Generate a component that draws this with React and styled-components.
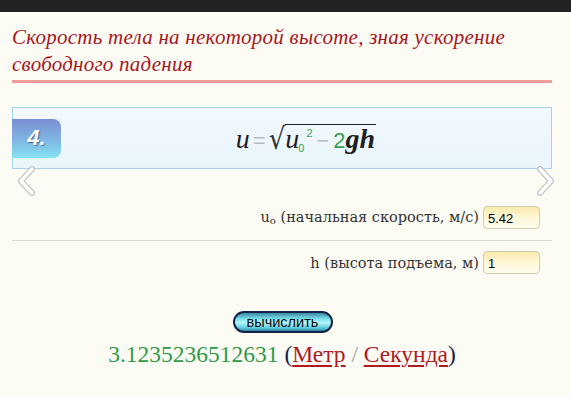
import React from "react";
import styled, { createGlobalStyle } from "styled-components";

const GlobalStyle = createGlobalStyle`
  html, body { margin: 0; padding: 0; }
  body { background: #fcfcf5; font-family: "Liberation Serif", serif; }
`;

const TopBar = styled.div`
  height: 12px;
  background: #222222;
`;

const Main = styled.div`
  padding: 0 19px 0 12px;
`;

const Title = styled.h1`
  margin: 12px 0 0;
  padding-bottom: 2px;
  border-bottom: 3px solid #f09c9c;
  font-family: "Liberation Serif", serif;
  font-style: italic;
  font-weight: normal;
  font-size: 21px;
  letter-spacing: 0.25px;
  line-height: 27px;
  color: #a8161b;
`;

const Card = styled.div`
  position: relative;
  margin-top: 24px;
  height: 60px;
  border: 1px solid #a7d3ea;
  background: linear-gradient(180deg, #f2f9fe 0%, #e9f5fc 100%);
  display: flex;
  align-items: center;
`;

const Badge = styled.div`
  width: 49px;
  height: 39px;
  margin-left: -1px;
  border-radius: 0 8px 8px 0;
  background: linear-gradient(180deg, #7b8fd4 0%, #7fb6e4 55%, #86e3f2 100%);
  display: flex;
  align-items: center;
  justify-content: center;
  font-family: "Liberation Sans", Arial, sans-serif;
  font-weight: bold;
  font-style: italic;
  font-size: 22px;
  color: #ffffff;
  text-shadow: 1px 1px 1px rgba(40, 60, 110, 0.6);
`;

const Formula = styled.div`
  flex: 1;
  display: flex;
  justify-content: center;
  align-items: baseline;
  padding-top: 4px;
  color: #222;
`;

const Var = styled.span`
  font-family: "Liberation Serif", "DejaVu Serif", serif;
  font-style: italic;
  font-size: 28px;
  font-weight: ${(p) => (p.$bold ? "bold" : "normal")};
  color: #1e1e1e;
`;

const Op = styled.span`
  font-family: "Liberation Sans", Arial, sans-serif;
  font-size: 22px;
  color: #bdbdbd;
  margin: 0 ${(p) => p.$gap || 3}px;
`;

const Num = styled.span`
  font-family: "Liberation Sans", Arial, sans-serif;
  font-size: 22px;
  color: #3e9f52;
`;

const Small = styled.span`
  font-family: "Liberation Sans", Arial, sans-serif;
  font-size: 11px;
  color: #3e9f52;
  position: relative;
  top: ${(p) => p.$top}px;
  margin-left: ${(p) => p.$ml || 0}px;
`;

const Radical = styled.span`
  font-family: "DejaVu Serif", serif;
  font-size: 26px;
  color: #333;
  transform: scaleY(1.15);
  display: inline-block;
`;

const Radicand = styled.span`
  border-top: 1px solid #222;
  display: inline-flex;
  align-items: baseline;
  padding-right: 1px;
  line-height: 28px;
`;

const Chevron = styled.svg`
  position: absolute;
  top: 58px;
  ${(p) => (p.$side === "left" ? "left: 4px;" : "right: -4px;")}
  width: 20px;
  height: 30px;
`;

const Row = styled.div`
  box-sizing: border-box;
  display: flex;
  justify-content: flex-end;
  align-items: center;
  gap: 4px;
  padding: ${(p) => p.$pad};
  ${(p) => (p.$divider ? "border-bottom: 1px solid #dedbd2;" : "")}
`;

const Label = styled.span`
  font-family: "DejaVu Serif", Georgia, serif;
  font-size: 14.5px;
  color: #333;
`;

const Sub = styled.sub`
  font-size: 10px;
  vertical-align: -2px;
`;

const Input = styled.input`
  box-sizing: border-box;
  width: 57px;
  height: 23px;
  border: 1px solid #cfcbb0;
  border-radius: 4px;
  background: linear-gradient(180deg, #fcebad 0%, #fff6d2 45%, #fffdf0 100%);
  font-family: "Liberation Sans", Arial, sans-serif;
  font-size: 13px;
  color: #000;
  padding: 2px 4px 0;
  outline: none;
`;

const ButtonWrap = styled.div`
  display: flex;
  justify-content: center;
  margin-top: 37px;
`;

const CalcButton = styled.button`
  box-sizing: border-box;
  width: 100px;
  height: 22px;
  border: 2px solid #14224a;
  border-radius: 11px;
  background: linear-gradient(180deg, #3a8aa0 0%, #7fe6f2 35%, #b6f6fb 55%, #52c8dc 85%, #2c7f98 100%);
  font-family: "Liberation Sans", Arial, sans-serif;
  font-size: 14.5px;
  color: #0a0a0a;
  padding: 0;
  line-height: 16px;
  margin-left: 1px;
`;

const Result = styled.div`
  text-align: center;
  margin-top: 8px;
  font-family: "Liberation Serif", serif;
  font-size: 23.5px;
  color: #1b1b45;
`;

const Value = styled.span`
  color: #2f9a48;
`;

const UnitLink = styled.a`
  color: #b01a1f;
  text-decoration: underline;
  text-decoration-thickness: 2px;
  text-underline-offset: 3px;
`;

const Slash = styled.span`
  color: #a0a0a0;
`;

function ChevronIcon({ side }) {
  const pts = side === "left" ? "15,3 4,15 15,27" : "5,3 16,15 5,27";
  return (
    <Chevron $side={side} viewBox="0 0 20 30">
      <polyline points={pts} fill="none" stroke="#c2c2c2" strokeWidth="6" strokeLinecap="round" strokeLinejoin="round" />
      <polyline points={pts} fill="none" stroke="#ffffff" strokeWidth="3.5" strokeLinecap="round" strokeLinejoin="round" />
    </Chevron>
  );
}

export default function App() {
  return (
    <>
      <GlobalStyle />
      <TopBar />
      <Main>
        <Title>Скорость тела на некоторой высоте, зная ускорение свободного падения</Title>
        <Card>
          <Badge>4.</Badge>
          <Formula>
            <Var>u</Var>
            <Op $gap={3}>=</Op>
            <Radical>√</Radical>
            <Radicand>
              <Var>u</Var>
              <Small $top={4} $ml={-1}>0</Small>
              <Small $top={-11} $ml={2}>2</Small>
              <Op $gap={4}>−</Op>
              <Num>2</Num>
              <Var $bold>gh</Var>
            </Radicand>
          </Formula>
          <ChevronIcon side="left" />
          <ChevronIcon side="right" />
        </Card>
        <Row $pad="37px 12px 11px 0" $divider>
          <Label>
            u<Sub>o</Sub> (начальная скорость, м/с)
          </Label>
          <Input defaultValue="5.42" />
        </Row>
        <Row $pad="10px 12px 0 0">
          <Label>h (высота подъема, м)</Label>
          <Input defaultValue="1" />
        </Row>
        <ButtonWrap>
          <CalcButton>вычислить</CalcButton>
        </ButtonWrap>
        <Result>
          <Value>3.1235236512631</Value> (<UnitLink href="#">Метр</UnitLink> <Slash>/</Slash>{" "}
          <UnitLink href="#">Секунда</UnitLink>)
        </Result>
      </Main>
    </>
  );
}
